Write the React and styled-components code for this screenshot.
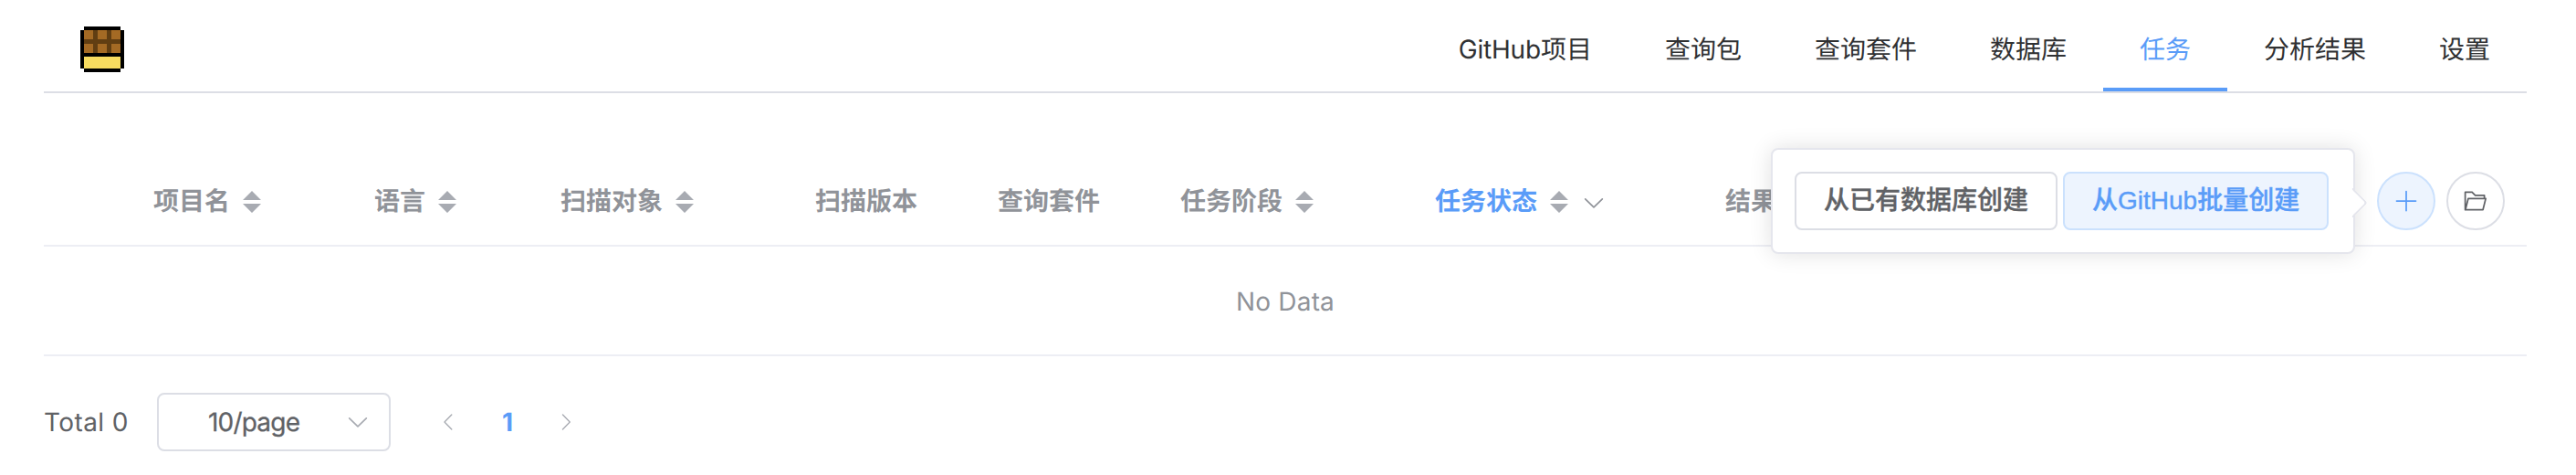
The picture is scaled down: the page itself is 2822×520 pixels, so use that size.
import React from "react";
import styled, { createGlobalStyle } from "styled-components";

const primary = "#5a9cf8";

const GlobalStyle = createGlobalStyle`
  * { box-sizing: border-box; }
  body {
    margin: 0;
    background: #fff;
    font-family: Inter, "Noto Sans CJK SC", sans-serif;
    font-size: 28px;
    line-height: 40px;
    color: #606266;
    text-rendering: geometricPrecision;
  }
`;

const Page = styled.div`
  height: 520px;
  padding: 0 54px 0 48px;
`;

const Header = styled.header`
  display: flex;
  justify-content: space-between;
  height: 102px;
  padding-left: 40px;
  border-bottom: 2px solid #dcdee5;
`;

const Logo = styled.svg`
  display: block;
  width: 48px;
  height: 50px;
  margin-top: 29px;
`;

const Nav = styled.nav`
  display: flex;
`;

const NavItem = styled.a`
  height: 100px;
  padding: 34px 40px 0;
  border-bottom: 4px solid ${(p) => (p.$active ? primary : "transparent")};
  color: ${(p) => (p.$active ? primary : "#303133")};
  white-space: nowrap;
`;

const Brand = styled.span`
  letter-spacing: -0.2px;
`;

const TableHead = styled.div`
  display: flex;
  align-items: center;
  height: 98px;
  margin-top: 70px;
  padding: 0 24px 0 120px;
  border-bottom: 2px solid #edeef4;
  font-weight: 700;
  color: #909399;
`;

const HeadCell = styled.div`
  display: flex;
  align-items: center;
  gap: 14px;
  width: ${(p) => p.$width}px;
  color: ${(p) => (p.$active ? primary : "inherit")};
  white-space: nowrap;
`;

const Carets = styled.svg`
  width: 20px;
  height: 24px;
  margin-top: 2px;
  fill: #a8abb2;
`;

const Icon = styled.svg`
  width: ${(p) => p.$size}px;
  height: ${(p) => p.$size}px;
  flex: none;
  fill: currentColor;
`;

const FilterIcon = styled(Icon)`
  margin-top: 4px;
  color: #909399;
`;

const Actions = styled.div`
  position: relative;
  display: flex;
  gap: 12px;
  margin-left: auto;
`;

const Button = styled.button`
  display: flex;
  align-items: center;
  justify-content: center;
  height: 64px;
  padding: 0 30px;
  border: 2px solid ${(p) => (p.$primary ? "#cbe1fd" : "#dcdee5")};
  border-radius: 8px;
  background: ${(p) => (p.$primary ? "#edf4fe" : "#fff")};
  color: ${(p) => (p.$primary ? primary : "#606266")};
  font: 500 28px/40px "Liberation Sans", "Noto Sans CJK SC", sans-serif;
  -webkit-text-stroke: 0.4px currentColor;
  white-space: nowrap;
`;

const RoundButton = styled(Button)`
  width: 64px;
  padding: 0;
  border-radius: 50%;
`;

const Popover = styled.div`
  position: absolute;
  right: calc(100% + 24px);
  top: -26px;
  display: flex;
  gap: 6px;
  width: 640px;
  height: 116px;
  padding: 24px;
  border: 2px solid #e5e6ed;
  border-radius: 8px;
  background: #fff;
  box-shadow: 0 0 24px rgba(0, 0, 0, 0.12);

  &::after {
    content: "";
    position: absolute;
    right: -11px;
    top: 46px;
    width: 20px;
    height: 20px;
    border: 2px solid #e5e6ed;
    border-left-color: transparent;
    border-bottom-color: transparent;
    border-top-right-radius: 4px;
    background: #fff;
    background-clip: padding-box;
    transform: rotate(45deg);
  }
`;

const EmptyRow = styled.div`
  display: flex;
  align-items: center;
  justify-content: center;
  height: 120px;
  padding-top: 2px;
  border-bottom: 2px solid #edeef4;
  color: #909399;
  letter-spacing: 0.2px;
`;

const Pagination = styled.div`
  display: flex;
  align-items: center;
  height: 64px;
  margin-top: 40px;
`;

const Total = styled.span`
  width: 124px;
  letter-spacing: 0.4px;
`;

const PageSize = styled.div`
  display: flex;
  align-items: center;
  justify-content: space-between;
  width: 256px;
  height: 64px;
  padding: 0 20px 0 54px;
  border: 2px solid #dcdee5;
  border-radius: 8px;
  letter-spacing: -0.8px;
  -webkit-text-stroke: 0.3px currentColor;

  svg { color: #a8abb2; }
`;

const Pager = styled.div`
  display: flex;
  align-items: center;
  margin-left: 32px;
  color: #a8abb2;
`;

const PagerItem = styled.span`
  display: flex;
  justify-content: center;
  width: 64px;
  color: ${(p) => (p.$active ? primary : "inherit")};
  font-weight: ${(p) => (p.$active ? 700 : 400)};
`;

const paths = {
  plus: "M480 480V128a32 32 0 0 1 64 0v352h352a32 32 0 1 1 0 64H544v352a32 32 0 1 1-64 0V544H128a32 32 0 0 1 0-64h352z",
  folder:
    "M878.08 448H241.92l-96 384h636.16l96-384zM832 384v-64H485.76L357.504 192H128v448l57.92-231.744A32 32 0 0 1 216.96 384H832zm-24.96 512H96a32 32 0 0 1-32-32V160a32 32 0 0 1 32-32h287.872l128.384 128H864a32 32 0 0 1 32 32v96h23.04a32 32 0 0 1 31.04 39.744l-112 448A32 32 0 0 1 807.04 896z",
  down: "M831.872 340.864 512 652.672 192.128 340.864a30.592 30.592 0 0 0-42.752 0 29.12 29.12 0 0 0 0 41.6L489.664 714.24a32 32 0 0 0 44.672 0l340.288-331.712a29.12 29.12 0 0 0 0-41.728 30.592 30.592 0 0 0-42.752 0z",
  left: "M609.408 149.376 277.76 489.6a32 32 0 0 0 0 44.672l331.648 340.352a29.12 29.12 0 0 0 41.728 0 30.592 30.592 0 0 0 0-42.752L339.264 511.936l311.872-319.872a30.592 30.592 0 0 0 0-42.688 29.12 29.12 0 0 0-41.728 0z",
  right:
    "M340.864 149.312a30.592 30.592 0 0 0 0 42.752L652.736 512 340.864 831.872a30.592 30.592 0 0 0 0 42.752 29.12 29.12 0 0 0 41.728 0L714.24 534.336a32 32 0 0 0 0-44.672L382.592 149.376a29.12 29.12 0 0 0-41.728 0z",
};

const Glyph = ({ name, size = 28, as: Tag = Icon }) => (
  <Tag $size={size} viewBox="0 0 1024 1024">
    <path d={paths[name]} />
  </Tag>
);

const columns = [
  { label: "项目名", width: 242, sortable: true },
  { label: "语言", width: 204, sortable: true },
  { label: "扫描对象", width: 279, sortable: true },
  { label: "扫描版本", width: 200 },
  { label: "查询套件", width: 200 },
  { label: "任务阶段", width: 279, sortable: true },
  { label: "任务状态", width: 318, sortable: true, active: true },
  { label: "结果", width: 56 },
];

const navItems = ["查询包", "查询套件", "数据库", "任务", "分析结果", "设置"];

export default function App() {
  return (
    <Page>
      <GlobalStyle />
      <Header>
        <Logo viewBox="0 0 48 50" shapeRendering="crispEdges">
          <path d="M4 0h40v4h4v42h-4v4H4v-4H0V4h4z" fill="#000" />
          <path d="M4 4h40v25H4z" fill="#613e12" />
          <path d="M4 4h10v10H4zM19 4h10v10H19zM34 4h10v10H34zM4 19h10v10H4zM19 19h10v10H19zM34 19h10v10H34z" fill="#a46a24" />
          <path d="M4 33h40v13H4z" fill="#f8dc60" />
        </Logo>
        <Nav>
          <NavItem>
            <Brand>GitHub</Brand>项目
          </NavItem>
          {navItems.map((label) => (
            <NavItem key={label} $active={label === "任务"}>
              {label}
            </NavItem>
          ))}
        </Nav>
      </Header>

      <TableHead>
        {columns.map((c) => (
          <HeadCell key={c.label} $width={c.width} $active={c.active}>
            {c.label}
            {c.sortable && (
              <Carets viewBox="0 0 20 24">
                <path d="M10 0 20 10H0zM0 14h20L10 24z" />
              </Carets>
            )}
            {c.active && <Glyph name="down" as={FilterIcon} />}
          </HeadCell>
        ))}
        <Actions>
          <RoundButton $primary>
            <Glyph name="plus" />
          </RoundButton>
          <RoundButton>
            <Glyph name="folder" />
          </RoundButton>
          <Popover>
            <Button>从已有数据库创建</Button>
            <Button $primary>从GitHub批量创建</Button>
          </Popover>
        </Actions>
      </TableHead>

      <EmptyRow>No Data</EmptyRow>

      <Pagination>
        <Total>Total 0</Total>
        <PageSize>
          10/page
          <Glyph name="down" />
        </PageSize>
        <Pager>
          <PagerItem>
            <Glyph name="left" size={24} />
          </PagerItem>
          <PagerItem $active>1</PagerItem>
          <PagerItem>
            <Glyph name="right" size={24} />
          </PagerItem>
        </Pager>
      </Pagination>
    </Page>
  );
}
